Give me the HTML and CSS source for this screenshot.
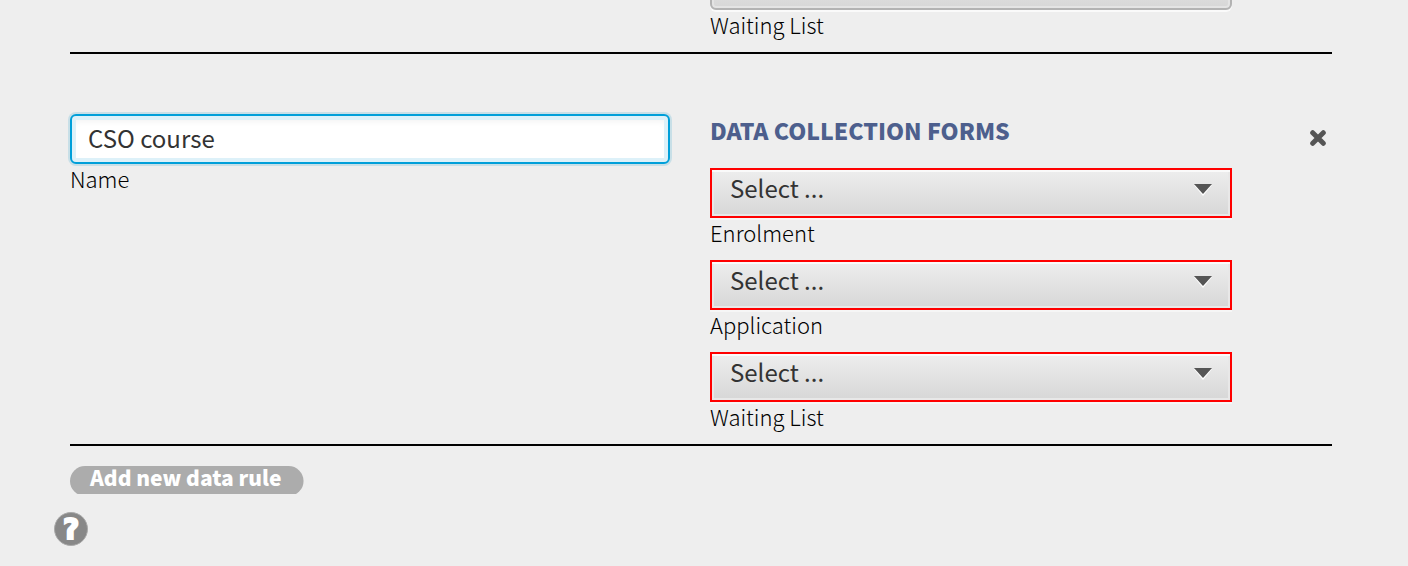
FILE: index.html
```html
<!DOCTYPE html>
<html lang="en">
<head>
<meta charset="utf-8">
<title>Data rules</title>
<link rel="stylesheet" href="styles.css">
</head>
<body>
<main class="page">
  <section class="rule rule-previous">
    <div class="forms">
      <div class="field">
        <div class="picker"><select id="prev-waiting" class="select"></select></div>
        <label class="label" for="prev-waiting">Waiting List</label>
      </div>
    </div>
  </section>
  <section class="rule">
    <div class="field">
      <input class="input" id="name" type="text" value="CSO course">
      <label class="label" for="name">Name</label>
    </div>
    <div class="forms">
      <h2 class="title">DATA COLLECTION FORMS</h2>
      <div class="field">
        <div class="picker">
          <select class="select invalid" id="enrolment"><option>Select ...</option></select>
          <svg class="arrow" viewBox="0 0 18 12" aria-hidden="true"><path d="M0 1h18L9 12z" fill="#fff"/><path d="M0 0h18L9 10z" fill="#555"/></svg>
        </div>
        <label class="label" for="enrolment">Enrolment</label>
      </div>
      <div class="field">
        <div class="picker">
          <select class="select invalid" id="application"><option>Select ...</option></select>
          <svg class="arrow" viewBox="0 0 18 12" aria-hidden="true"><path d="M0 1h18L9 12z" fill="#fff"/><path d="M0 0h18L9 10z" fill="#555"/></svg>
        </div>
        <label class="label" for="application">Application</label>
      </div>
      <div class="field">
        <div class="picker">
          <select class="select invalid" id="waiting"><option>Select ...</option></select>
          <svg class="arrow" viewBox="0 0 18 12" aria-hidden="true"><path d="M0 1h18L9 12z" fill="#fff"/><path d="M0 0h18L9 10z" fill="#555"/></svg>
        </div>
        <label class="label" for="waiting">Waiting List</label>
      </div>
    </div>
    <button class="remove" type="button" aria-label="Remove rule">
      <svg class="cross" viewBox="0 0 16 16" aria-hidden="true"><path d="M2.7 2.7l10.6 10.6M13.3 2.7L2.7 13.3" stroke="#555" stroke-width="5" stroke-linecap="round"/></svg>
    </button>
  </section>
  <button class="add" type="button">Add new data rule</button>
  <button class="help" type="button">?</button>
</main>
</body>
</html>
```
FILE: styles.css
```css
* {
  box-sizing: border-box;
}

body {
  margin: 0;
  background: #eee;
  color: #000;
  font-family: "Noto Sans CJK SC", "Open Sans", sans-serif;
}

button,
input,
select {
  font-family: inherit;
}

.page {
  padding: 0 76px 0 70px;
  margin-top: -40px;
}

.rule {
  display: grid;
  grid-template-columns: 600fr 522fr 60px;
  column-gap: 40px;
  align-items: start;
  padding: 60px 0 14px;
  border-bottom: 2px solid #000;
}

.rule-previous {
  padding-top: 0;
}

.rule-previous .forms {
  grid-column: 2;
}

.forms {
  display: flex;
  flex-direction: column;
  gap: 14px;
}

.field {
  display: flex;
  flex-direction: column;
}

.label {
  font-size: 22px;
  font-weight: 300;
  line-height: 28px;
}

.input {
  width: 100%;
  height: 50px;
  padding: 0 16px 4px;
  border: 2px solid #009fd9;
  border-radius: 6px;
  background: #fff;
  box-shadow: 0 0 0 2px #c8dfe7, inset 0 0 0 4px #ddf1f9, inset 0 6px 6px #f4f4f4;
  color: #333;
  font-size: 24px;
  outline: none;
}

.title {
  margin: 0;
  height: 40px;
  color: #4d5f8d;
  font-size: 23px;
  font-weight: 900;
  line-height: 32px;
}

.picker {
  position: relative;
}

.select {
  display: block;
  width: 100%;
  height: 50px;
  padding: 0 48px 12px 18px;
  appearance: none;
  border: 2px solid #b3b3b3;
  border-radius: 6px;
  background: linear-gradient(#eee, #d7d7d7);
  box-shadow: 0 2px 0 #fafafa, inset 0 0 0 2px #e4e4e4;
  color: #333;
  font-size: 24px;
  outline: none;
}

.select.invalid {
  border-color: #f00;
  border-radius: 0;
  box-shadow: 0 2px 0 #f6f6f6, inset 0 2px 0 #fafafa, inset 0 0 0 2px #e8e8e8;
}

.arrow {
  position: absolute;
  top: 16px;
  right: 20px;
  width: 18px;
  height: 12px;
  pointer-events: none;
}

.remove {
  display: flex;
  justify-self: end;
  margin-top: 12px;
  padding: 4px 6px;
  border: 0;
  background: none;
}

.cross {
  width: 16px;
  height: 16px;
}

.add {
  display: block;
  height: 28px;
  margin-top: 20px;
  padding: 0 22px 6px 20px;
  border: 0;
  background: #acacac;
  clip-path: inset(0 0 -2px 0 round 15px);
  color: #fff;
  font-size: 21px;
  font-weight: 900;
  line-height: 22px;
}

.help {
  display: flex;
  align-items: center;
  justify-content: center;
  width: 34px;
  height: 34px;
  margin: 18px 0 0 -16px;
  padding: 2px 0 0;
  border: 1px solid #aaa;
  border-radius: 50%;
  background: #888;
  color: #fff;
  font-family: "DejaVu Sans", sans-serif;
  font-size: 28px;
  font-weight: 700;
  line-height: 30px;
  -webkit-text-stroke: 2px #fff;
}
```
